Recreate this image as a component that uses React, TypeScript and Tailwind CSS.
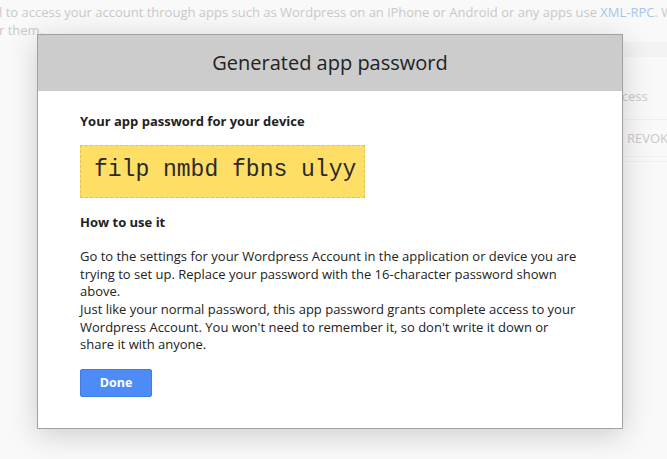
import React from 'react';

const font = { fontFamily: '"Open Sans", "Liberation Sans", sans-serif' };

const BackgroundPage: React.FC = () => (
  <div className="text-[13px] leading-[18px] text-[#c9c9c9]">
    {/* faded intro text behind the overlay */}
    <div className="pt-[3px] whitespace-nowrap -ml-[1px]">
      <div>
        l to access your account through apps such as Wordpress on an iPhone or Android or any apps use{' '}
        <span className="text-[#a9c3ec]">XML-RPC</span>. W
      </div>
      <div>r them.</div>
    </div>

    {/* app passwords table, mostly hidden */}
    <div className="ml-[540px] w-[127px] mt-[3px] overflow-hidden whitespace-nowrap">
      <div className="h-[15px] bg-[#f3f3f3]" />
      <div className="h-[63px] flex items-end pb-[14px] pl-[40px] border-b border-[#efefef]">
        Last access
      </div>
      <div className="h-[37px] flex items-center pl-[87px] border-b border-[#efefef]">REVOK</div>
      <div className="h-[5px] border-b border-[#efefef]" />
    </div>
  </div>
);

const PasswordDialog: React.FC = () => (
  <div className="absolute left-[37px] top-[34px] w-[586px] border border-[#a0a0a0] bg-white shadow-[0_6px_28px_rgba(0,0,0,0.18)]">
    <div className="h-[56px] bg-[#cccccc] flex items-center justify-center text-[20px] text-[#222]">
      Generated app password
    </div>

    <div className="px-[42px] pt-[22px] pb-[31px] text-[13px] leading-[17.6px] text-[#222]">
      <div className="font-bold">Your app password for your device</div>

      <div className="mt-[14px] w-[285px] h-[53px] flex items-center pl-[13px] bg-[#ffde66] border border-dashed border-[#e2c35a]">
        <span
          className="text-[23px] text-[#2a2a2a] whitespace-nowrap"
          style={{ fontFamily: '"Liberation Mono", "Courier New", monospace' }}
        >
          filp nmbd fbns ulyy
        </span>
      </div>

      <div className="mt-[16px] font-bold">How to use it</div>

      <p className="mt-[17px]">
        Go to the settings for your Wordpress Account in the application or device you are trying to set up.
        Replace your password with the 16-character password shown above.
        <br />
        Just like your normal password, this app password grants complete access to your Wordpress Account.
        You won't need to remember it, so don't write it down or share it with anyone.
      </p>

      <button className="mt-[15px] w-[72px] h-[28px] rounded-[2px] bg-[#4d8cf6] border border-[#3f7ce8] text-white text-[12.5px] font-bold">
        Done
      </button>
    </div>
  </div>
);

export default function App() {
  return (
    <div className="relative w-[667px] h-[459px] overflow-hidden bg-[#f9f9f9]" style={font}>
      <BackgroundPage />
      <PasswordDialog />
    </div>
  );
}
